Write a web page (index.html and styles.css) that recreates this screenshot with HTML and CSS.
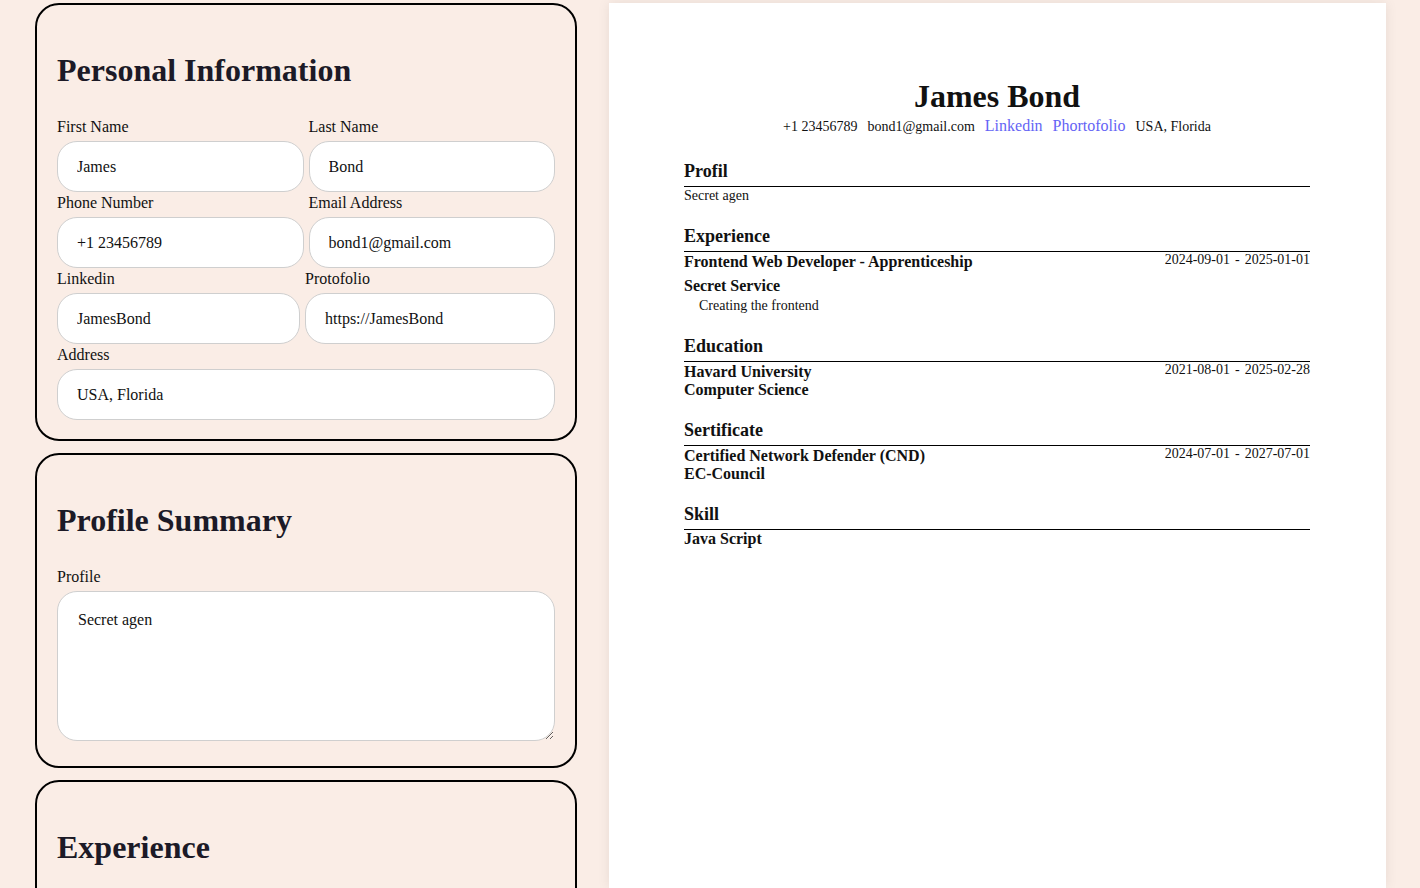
FILE: index.html
```html
<!DOCTYPE html>
<html lang="en">
<head>
  <meta charset="UTF-8">
  <meta name="viewport" content="width=device-width, initial-scale=1.0">
  <title>CV Builder</title>
  <link rel="stylesheet" href="styles.css">
</head>
<body>
  <div class="page">
    <div class="editor">
      <section class="card">
        <h1>Personal Information</h1>
        <div class="row">
          <div class="field">
            <label for="firstName">First Name</label>
            <input type="text" id="firstName" value="James">
          </div>
          <div class="field">
            <label for="lastName">Last Name</label>
            <input type="text" id="lastName" value="Bond">
          </div>
        </div>
        <div class="row">
          <div class="field">
            <label for="phone">Phone Number</label>
            <input type="text" id="phone" value="+1 23456789">
          </div>
          <div class="field">
            <label for="email">Email Address</label>
            <input type="text" id="email" value="bond1@gmail.com">
          </div>
        </div>
        <div class="row row-links">
          <div class="field">
            <label for="linkedin">Linkedin</label>
            <input type="text" id="linkedin" value="JamesBond">
          </div>
          <div class="field">
            <label for="portfolio">Protofolio</label>
            <input type="text" id="portfolio" value="https://JamesBond">
          </div>
        </div>
        <div class="field last">
          <label for="address">Address</label>
          <input type="text" id="address" value="USA, Florida">
        </div>
      </section>

      <section class="card">
        <h1>Profile Summary</h1>
        <div class="field">
          <label for="profile">Profile</label>
          <textarea id="profile">Secret agen</textarea>
        </div>
      </section>

      <section class="card">
        <h1>Experience</h1>
      </section>
    </div>

    <div class="preview">
      <div class="cv-header">
        <h2 class="cv-name">James Bond</h2>
        <div class="cv-contact">
          <span>+1 23456789</span>
          <span>bond1@gmail.com</span>
          <a href="#">Linkedin</a>
          <a href="#">Phortofolio</a>
          <span>USA, Florida</span>
        </div>
      </div>

      <div class="cv-section">
        <h3>Profil</h3>
        <p class="cv-text">Secret agen</p>
      </div>

      <div class="cv-section">
        <h3>Experience</h3>
        <div class="cv-row">
          <strong>Frontend Web Developer - Apprenticeship</strong>
          <span class="cv-date">2024-09-01 - 2025-01-01</span>
        </div>
        <div class="cv-sub">Secret Service</div>
        <p class="cv-desc">Creating the frontend</p>
      </div>

      <div class="cv-section">
        <h3>Education</h3>
        <div class="cv-row">
          <strong>Havard University</strong>
          <span class="cv-date">2021-08-01 - 2025-02-28</span>
        </div>
        <div class="cv-line">Computer Science</div>
      </div>

      <div class="cv-section">
        <h3>Sertificate</h3>
        <div class="cv-row">
          <strong>Certified Network Defender (CND)</strong>
          <span class="cv-date">2024-07-01 - 2027-07-01</span>
        </div>
        <div class="cv-line">EC-Council</div>
      </div>

      <div class="cv-section">
        <h3>Skill</h3>
        <div class="cv-line">Java Script</div>
      </div>
    </div>
  </div>
</body>
</html>
```

FILE: styles.css
```css
body {
  margin: 0;
  font-family: 'Liberation Serif', 'Times New Roman', serif;
  background: #faede6;
  color: #111;
  overflow: hidden;
}

.page {
  display: flex;
  gap: 32px;
  padding: 3px 34px 0 35px;
  height: 885px;
}

/* Form side */

.editor {
  width: 542px;
  flex-shrink: 0;
  display: flex;
  flex-direction: column;
  gap: 12px;
}

.card {
  border: 2px solid #000;
  border-radius: 24px;
  padding: 20px 20px 19px;
  background: #faede6;
}

.card h1 {
  font-size: 32px;
  line-height: 37px;
  margin: 27px 0 29px;
  color: #1c1a27;
}

.row {
  display: grid;
  grid-template-columns: 1fr 1fr;
  gap: 5px;
}

.row-links {
  grid-template-columns: 243fr 250fr;
}

.field {
  margin-bottom: 2px;
}

.field.last {
  margin-bottom: 0;
}

label {
  display: block;
  font-size: 16px;
  line-height: 18px;
  color: #111;
}

input,
textarea {
  display: block;
  width: 100%;
  box-sizing: border-box;
  margin-top: 5px;
  border: 1px solid #cfcfcf;
  border-radius: 20px;
  background: #fff;
  font-family: 'Liberation Serif', 'Times New Roman', serif;
  font-size: 16px;
  color: #111;
}

input {
  height: 51px;
  padding: 0 19px;
}

textarea {
  height: 150px;
  padding: 19px 20px;
  margin-bottom: 6px;
  resize: vertical;
}

/* CV preview */

.preview {
  width: 777px;
  flex-shrink: 0;
  background: #fff;
  padding: 75px 76px 0 75px;
  box-sizing: border-box;
  box-shadow: 0 0 12px rgba(0, 0, 0, 0.08);
}

.cv-header {
  text-align: center;
  padding-bottom: 5px;
}

.cv-name {
  font-size: 32px;
  line-height: 37px;
  margin: 0 0 2px;
}

.cv-contact {
  display: flex;
  justify-content: center;
  align-items: baseline;
  gap: 10px;
  font-size: 16px;
}

.cv-contact span {
  font-size: 14px;
}

.cv-contact a {
  color: #6464f5;
  text-decoration: none;
}

.cv-section {
  margin-top: 21px;
}

.cv-section h3 {
  font-size: 18px;
  line-height: 20px;
  margin: 0;
  padding-bottom: 5px;
  border-bottom: 1px solid #000;
}

.cv-text {
  margin: 0;
  font-size: 14px;
  line-height: 18px;
}

.cv-row {
  display: flex;
  justify-content: space-between;
  align-items: flex-start;
}

.cv-row strong,
.cv-sub {
  font-size: 16px;
  line-height: 19px;
  font-weight: bold;
}

.cv-line {
  font-size: 16px;
  line-height: 18px;
  font-weight: bold;
}

.cv-date {
  font-size: 14px;
  line-height: 16px;
  word-spacing: 1.5px;
}

.cv-sub {
  margin-top: 5px;
}

.cv-desc {
  margin: 1px 0 0;
  padding-left: 15px;
  font-size: 14px;
  line-height: 19px;
}
```
